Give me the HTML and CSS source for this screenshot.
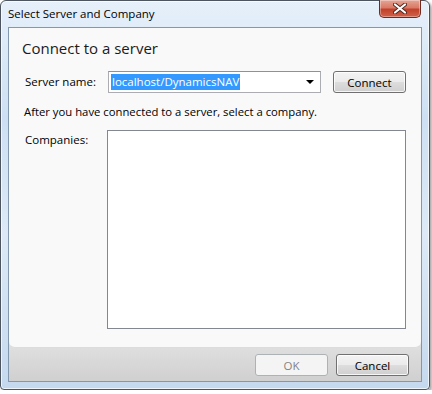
FILE: index.html
```html
<!DOCTYPE html>
<html lang="en">
<head>
    <meta charset="UTF-8">
    <title>Select Server and Company</title>
    <link rel="stylesheet" href="styles.css">
</head>
<body>
    <div class="window">
        <!-- Title bar -->
        <div class="titlebar">
            <span class="title">Select Server and Company</span>
            <button class="close" aria-label="Close">
                <svg width="14" height="11" viewBox="0 0 14 11">
                    <path d="M2 1.5 L12 9.5 M12 1.5 L2 9.5" stroke="#4a2a24" stroke-width="4" stroke-linecap="round"/>
                    <path d="M2 1.5 L12 9.5 M12 1.5 L2 9.5" stroke="#fff" stroke-width="2.2" stroke-linecap="round"/>
                </svg>
            </button>
        </div>

        <div class="client">
            <div class="content">
                <h1 class="instruction">Connect to a server</h1>

                <div class="row server-row">
                    <label class="field-label" for="server">Server name:</label>
                    <div class="combo" id="server">
                        <span class="selected">localhost/DynamicsNAV</span>
                        <svg class="arrow" width="8" height="4" viewBox="0 0 8 4"><path d="M0 0 H8 L4 4 Z" fill="#000"/></svg>
                    </div>
                    <button class="btn connect">Connect</button>
                </div>

                <p class="hint">After you have connected to a server, select a company.</p>

                <div class="row companies-row">
                    <label class="field-label">Companies:</label>
                    <div class="listbox"></div>
                </div>
            </div>

            <!-- Footer -->
            <div class="footer">
                <button class="btn" disabled>OK</button>
                <button class="btn">Cancel</button>
            </div>
        </div>
    </div>
</body>
</html>
```

FILE: styles.css
```css
body {
    margin: 0;
    background: #fff;
    font-family: "Open Sans", "Noto Sans", sans-serif;
    font-size: 11.5px;
    color: #000;
}

/* Window frame */
.window {
    width: 428px;
    height: 388px;
    border: 1px solid #4d5560;
    border-radius: 6px 6px 4px 4px;
    background: linear-gradient(180deg, #e6f0fa 0%, #cde0f3 30%, #dde9f6 60%, #c5d9ee 100%);
    box-shadow: 2px 2px 3px rgba(0, 0, 0, 0.35), inset 0 0 0 1px rgba(255, 255, 255, 0.7);
    display: flex;
    flex-direction: column;
}

.titlebar {
    height: 26px;
    display: flex;
    align-items: flex-start;
    justify-content: space-between;
    padding-left: 7px;
    padding-right: 8px;
}

.title {
    margin-top: 5px;
    font-size: 11.5px;
    color: #000;
}

.close {
    width: 42px;
    height: 18px;
    margin-top: -1px;
    padding: 0;
    border: 1px solid #6d2b22;
    border-top: none;
    border-radius: 0 0 5px 5px;
    background: linear-gradient(180deg, #e6a596 0%, #d87a66 45%, #c2412a 55%, #d0624b 100%);
    box-shadow: inset 0 0 0 1px rgba(255, 255, 255, 0.35);
    display: flex;
    align-items: center;
    justify-content: center;
}

/* Client area */
.client {
    flex: 1;
    margin: 0 7px 7px;
    border: 1px solid #8397ad;
    background: linear-gradient(180deg, #ededed 0%, #e2e2e2 88%, #d0d0d0 100%);
    display: flex;
    flex-direction: column;
}

.content {
    background: #f9f9f9;
    height: 320px;
    border-bottom: 1px solid #dcdcdc;
    border-radius: 0 0 6px 6px;
    padding-top: 10px;
    box-sizing: border-box;
}

.instruction {
    margin: 0 0 13px 13px;
    font-size: 15px;
    font-weight: normal;
    line-height: 20px;
    color: #1b1b1b;
}

.row {
    display: flex;
    align-items: flex-start;
    padding-left: 16px;
}

.field-label {
    width: 83px;
    line-height: 22px;
}

.combo {
    width: 203px;
    height: 20px;
    border: 1px solid #abadb3;
    border-top-color: #8e9296;
    background: #fff;
    display: flex;
    align-items: center;
    justify-content: space-between;
    padding: 0 6px 0 2px;
}

.selected {
    background: #3399ff;
    color: #fff;
    line-height: 16px;
    padding: 0 1px;
}

.btn {
    font-family: inherit;
    font-size: 11.5px;
    width: 73px;
    height: 22px;
    padding: 0;
    border: 1px solid #707070;
    border-radius: 3px;
    background: linear-gradient(180deg, #f3f3f3 0%, #ebebeb 50%, #dddddd 51%, #cfcfcf 100%);
    box-shadow: inset 0 0 0 1px rgba(255, 255, 255, 0.8);
    color: #000;
}

.connect {
    margin-left: 12px;
}

.hint {
    margin: 11px 0 0 15px;
    line-height: 16px;
    font-size: 11.3px;
}

.companies-row {
    margin-top: 10px;
}

.companies-row .field-label {
    width: 82px;
    line-height: 16px;
    padding-top: 2px;
}

.listbox {
    width: 297px;
    height: 197px;
    border: 1px solid #828790;
    background: #fff;
}

.footer {
    flex: 1;
    display: flex;
    justify-content: flex-end;
    align-items: flex-start;
    gap: 8px;
    padding: 6px 12px 0 0;
}

.btn:disabled {
    border-color: #adb2b5;
    background: #f4f4f4;
    box-shadow: none;
    color: #838383;
}
```
